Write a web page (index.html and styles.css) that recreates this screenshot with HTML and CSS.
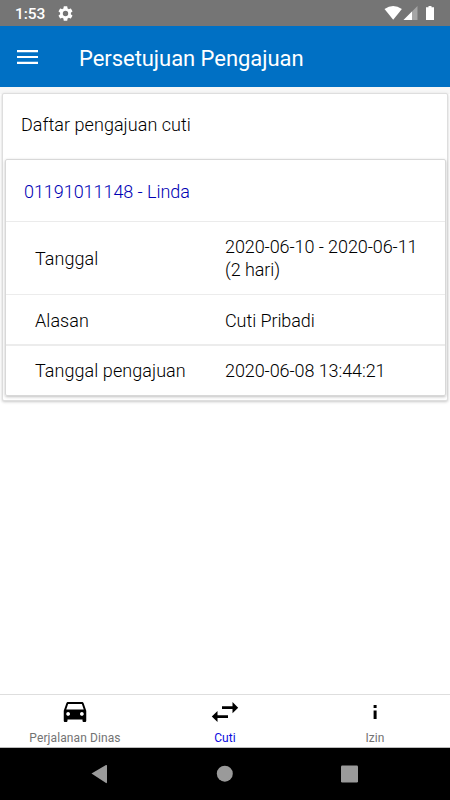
FILE: index.html
```html
<!DOCTYPE html>
<html lang="id">
<head>
<meta charset="utf-8">
<title>Persetujuan Pengajuan</title>
<link rel="stylesheet" href="styles.css">
</head>
<body>
<div class="status">
  <span class="clock">1:53</span>
  <svg class="gear" width="16" height="16" viewBox="2 2 20 20"><path fill="#fff" d="M19.14 12.94c.04-.3.06-.61.06-.94s-.02-.64-.07-.94l2.03-1.58a.49.49 0 0 0 .12-.61l-1.92-3.32a.49.49 0 0 0-.59-.22l-2.39.96a7 7 0 0 0-1.62-.94l-.36-2.54a.48.48 0 0 0-.48-.41h-3.84a.48.48 0 0 0-.47.41l-.36 2.54c-.59.24-1.13.57-1.62.94l-2.39-.96a.48.48 0 0 0-.59.22L2.74 8.87a.48.48 0 0 0 .12.61l2.03 1.58c-.05.3-.09.63-.09.94s.02.64.07.94l-2.03 1.58a.49.49 0 0 0-.12.61l1.92 3.32c.12.22.37.29.59.22l2.39-.96c.5.38 1.03.7 1.62.94l.36 2.54c.05.24.24.41.48.41h3.84c.24 0 .44-.17.47-.41l.36-2.54c.59-.24 1.13-.56 1.62-.94l2.39.96c.22.08.47 0 .59-.22l1.92-3.32a.48.48 0 0 0-.12-.61zM12 15.6A3.6 3.6 0 1 1 12 8.4a3.6 3.6 0 0 1 0 7.2z"/></svg>
  <svg class="signals" width="52" height="16" viewBox="0 0 52 16"><path fill="#fff" d="M.5 4Q9.200-2 17.900 4L9.200 14.800Z"/><path fill="#fff" fill-opacity=".35" d="M33.500 1V15H19.500Z"/><path fill="#fff" d="M28 6.500V15H19.500Z"/><path fill="#fff" d="M44.500 1h3v1.300h2.500V15h-8V2.300h2.500Z"/></svg>
</div>
<header class="bar">
  <svg class="menu" width="21" height="14" viewBox="0 0 21 14"><path fill="#fff" d="M0 0h21v2.200H0zM0 5.900h21v2.200H0zM0 11.800h21V14H0z"/></svg>
  <h1>Persetujuan Pengajuan</h1>
</header>
<main class="content">
  <section class="card">
    <h2>Daftar pengajuan cuti</h2>
    <article class="request">
      <div class="person">01191011148 - Linda</div>
      <div class="row tall"><span>Tanggal</span><span>2020-06-10 - 2020-06-11 (2 hari)</span></div>
      <div class="row middle"><span>Alasan</span><span>Cuti Pribadi</span></div>
      <div class="row last"><span>Tanggal pengajuan</span><span>2020-06-08 13:44:21</span></div>
    </article>
  </section>
</main>
<nav class="tabs">
  <div class="tab"><svg width="30" height="30" viewBox="0 0 24 24"><path d="M18.920 5.010C18.720 4.420 18.160 4 17.500 4h-11c-.66 0-1.210.42-1.420 1.010L3 11v8c0 .55.45 1 1 1h1c.55 0 1-.45 1-1v-1h12v1c0 .55.45 1 1 1h1c.55 0 1-.45 1-1v-8l-2.080-5.990zM6.500 15c-.83 0-1.500-.67-1.500-1.500S5.670 12 6.500 12s1.500.67 1.500 1.500S7.330 15 6.500 15zm11 0c-.83 0-1.500-.67-1.500-1.500s.67-1.500 1.500-1.500 1.500.67 1.500 1.500-.67 1.500-1.500 1.500zM5 10l1.500-4.500h11L19 10H5z"/></svg><span>Perjalanan Dinas</span></div>
  <div class="tab active"><svg width="30" height="30" viewBox="0 0 30 30"><path d="M12 9.200h10.500V5L28.200 10.700l-5.700 5.500v-4.100H12zM18 18.200H7.500V14L1.800 19.500 7.500 25v-3.900H18z"/></svg><span>Cuti</span></div>
  <div class="tab"><svg width="30" height="30" viewBox="0 0 30 30"><path d="M13.600 8h3v3h-3zM13.600 13.500h3v8.500h-3z"/></svg><span>Izin</span></div>
</nav>
<footer class="system">
  <svg width="450" height="52" viewBox="0 0 450 52"><g fill="#9a9a9a"><path d="M91.500 25.500 106 17q1-.5 1 1v16q0 1.500-1 1z"/><circle cx="224.800" cy="25.700" r="8"/><rect x="341" y="17.500" width="17" height="17" rx="1.200"/></g></svg>
</footer>
</body>
</html>
```
FILE: styles.css
```css
* { box-sizing: border-box; }
body {
  margin: 0;
  height: 800px;
  display: flex;
  flex-direction: column;
  overflow: hidden;
  background: #fff;
  color: #000;
  font-family: Roboto, "Liberation Sans", sans-serif;
}
svg { display: block; flex: none; }
.status {
  height: 26px;
  padding: 0 14px 0 15px;
  display: flex;
  align-items: center;
  background: #757575;
  color: #fff;
}
.clock { width: 43px; font-size: 15.500px; font-weight: 500; line-height: 20px; padding-top: 2px; letter-spacing: -.1px; }
.gear { width: 15px; height: 15px; }
.signals { margin-left: auto; }
.bar {
  height: 61px;
  padding-left: 17px;
  display: flex;
  align-items: center;
  background: #0070c4;
  box-shadow: 0 1px 1px #c9d3e4;
  color: #fff;
}
h1 { margin: 4px 0 0 41px; font-size: 22px; font-weight: 400; line-height: 28px; letter-spacing: -.05px; }
.content { flex: 1; padding: 6px 2px 0; background: linear-gradient(#f7f7f7 7px, #fff 7px); }
.card {
  height: 308px;
  padding: 0 2px;
  background: #fff;
  border: 1px solid #dedede;
  border-radius: 2px;
  box-shadow: 0 1px 3px rgba(0,0,0,.22);
}
h2 { margin: 0; height: 65px; padding: 0 0 0 16px; font-size: 18px; font-weight: 300; line-height: 62px; letter-spacing: .04px; }
.request {
  height: 237px;
  margin-right: -1px;
  border: 1px solid #d8d8d8;
  border-radius: 2px;
  box-shadow: 0 1px 3px rgba(0,0,0,.25);
  font-size: 18px;
  font-weight: 300;
  line-height: 23px;
}
.person { height: 62px; padding: 20px 18px; border-bottom: 1px solid #ebebeb; color: #0000b4; letter-spacing: -.05px; }
.row { height: 51px; display: grid; grid-template-columns: 190px 1fr; align-items: center; padding: 0 20px 0 29px; border-bottom: 2px solid #ececec; }
.row > :first-child { letter-spacing: .06px; }
.row > :last-child { letter-spacing: -.08px; }
.row.tall { height: 73px; border-bottom-width: 1px; }
.row.middle { padding-top: 2px; }
.row.last { height: 49px; border: 0; }
.tabs { height: 54px; display: flex; border-top: 1px solid #dedede; border-bottom: 1px solid #bbb; background: #fff; }
.tab { flex: 1; display: flex; flex-direction: column; align-items: center; padding-top: 2px; color: #737373; font-size: 12px; line-height: 16px; letter-spacing: .1px; }
.tab span { margin-top: 3px; }
.active { color: #0c0ce0; }
.system { height: 52px; background: #000; }
```
